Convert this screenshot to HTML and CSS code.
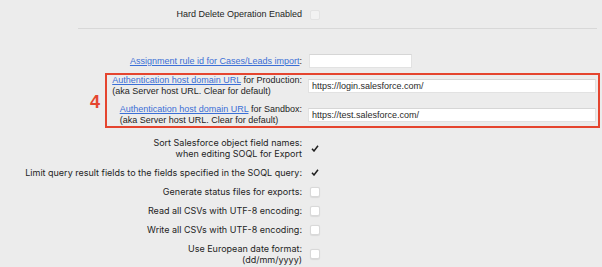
FILE: index.html
```html
<!DOCTYPE html>
<html lang="en">
<head>
    <meta charset="UTF-8">
    <meta name="viewport" content="width=device-width, initial-scale=1.0">
    <title>Data Loader Settings</title>
    <link rel="stylesheet" href="styles.css">
</head>
<body>

    <div class="settings">
        <div class="row">
            <div class="label">Hard Delete Operation Enabled</div>
            <span class="checkbox disabled"></span>
        </div>

        <hr class="divider">

        <div class="row row-assign">
            <div class="label"><a href="#">Assignment rule id for Cases/Leads import</a>:</div>
            <input type="text" class="field field-short" value="">
        </div>

        <!-- annotated block -->
        <div class="callout">
            <span class="callout-num">4</span>
            <div class="row">
                <div class="label"><span class="stack"><a href="#">Authentication host domain URL</a> for Production:<br>(aka Server host URL. Clear for default)</span></div>
                <input type="text" class="field field-long" value="https://login.salesforce.com/">
            </div>
            <div class="row row-sandbox">
                <div class="label"><span class="stack"><a href="#">Authentication host domain URL</a> for Sandbox:<br>(aka Server host URL. Clear for default)</span></div>
                <input type="text" class="field field-long" value="https://test.salesforce.com/">
            </div>
        </div>

        <div class="options">
            <div class="row">
                <div class="label">Sort Salesforce object field names:<br>when editing SOQL for Export</div>
                <span class="check"><svg width="8" height="7" viewBox="0 0 8 7"><path d="M1 3.8 L3 6 L7 0.8" fill="none" stroke="#1f1f1f" stroke-width="1.5"/></svg></span>
            </div>
            <div class="row">
                <div class="label">Limit query result fields to the fields specified in the SOQL query:</div>
                <span class="check"><svg width="8" height="7" viewBox="0 0 8 7"><path d="M1 3.8 L3 6 L7 0.8" fill="none" stroke="#1f1f1f" stroke-width="1.5"/></svg></span>
            </div>
            <div class="row">
                <div class="label">Generate status files for exports:</div>
                <span class="checkbox"></span>
            </div>
            <div class="row">
                <div class="label">Read all CSVs with UTF-8 encoding:</div>
                <span class="checkbox"></span>
            </div>
            <div class="row">
                <div class="label">Write all CSVs with UTF-8 encoding:</div>
                <span class="checkbox"></span>
            </div>
            <div class="row">
                <div class="label">Use European date format:<br>(dd/mm/yyyy)</div>
                <span class="checkbox"></span>
            </div>
        </div>
    </div>

</body>
</html>
```

FILE: styles.css
```css
/* Basic Reset */
* {
    margin: 0;
    padding: 0;
    box-sizing: border-box;
}

body {
    font-family: 'Liberation Sans', Arial, sans-serif;
    font-size: 9px;
    line-height: 11px;
    background: #ececec;
    color: #1e1e1e;
    width: 602px;
    height: 267px;
    overflow: hidden;
}

a {
    color: #3b6fd6;
    text-decoration: underline;
}

.settings {
    padding-top: 9px;
}

.row {
    display: flex;
    align-items: center;
}

.label {
    width: 302px;
    text-align: right;
    flex-shrink: 0;
}

.stack {
    display: inline-block;
    text-align: left;
}

/* Checkboxes */
.checkbox {
    width: 10px;
    height: 10px;
    margin-left: 8px;
    background: #fff;
    border: 1px solid #d9d9d9;
    border-radius: 2px;
    box-shadow: 0 0.5px 1px rgba(0, 0, 0, 0.08);
}

.checkbox.disabled {
    background: #f2f2f2;
    border-color: #e3e3e3;
    box-shadow: none;
}

.check {
    display: flex;
    width: 10px;
    height: 10px;
    margin-left: 9px;
    align-items: center;
}

.divider {
    border: none;
    border-top: 1px solid #d8d8d8;
    margin: 8px 5px 0 78px;
}

/* Text inputs */
.field {
    height: 14px;
    border: 1px solid #e2e2e2;
    border-top-color: #d6d6d6;
    background: #fff;
    font-family: 'Liberation Sans', Arial, sans-serif;
    font-size: 9px;
    color: #2a2a2a;
    padding: 0 3px;
    outline: none;
}

.row-assign {
    margin-top: 25px;
}

.field-short {
    width: 103px;
    margin-left: 7px;
}

/* Red annotation box */
.callout {
    position: relative;
    margin: 5px 2px 0 105px;
    border: 2px solid #e5452f;
}

.callout .label {
    width: 195px;
}

.callout-num {
    position: absolute;
    left: -17px;
    top: 18px;
    font-size: 18px;
    line-height: 1;
    font-weight: bold;
    color: #e5452f;
}

.field-long {
    width: 288px;
    margin-left: 6px;
}

.row-sandbox {
    margin-top: 7px;
}

/* lower checkbox list */
.options {
    display: flex;
    flex-direction: column;
    gap: 8px;
    margin-top: 9px;
    font-family: 'Inter', 'Liberation Sans', Arial, sans-serif;
}
```
